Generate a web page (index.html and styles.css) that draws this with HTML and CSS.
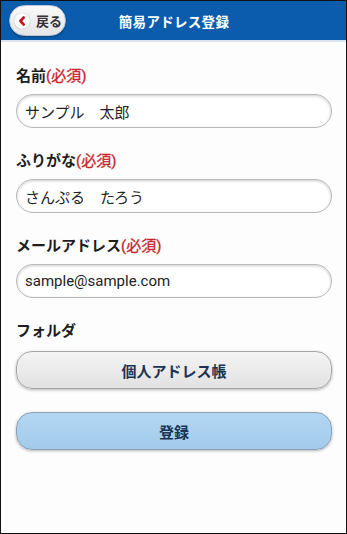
FILE: index.html
```html
<!DOCTYPE html>
<html>
<head>
	<meta charset="utf-8">
	<title>簡易アドレス登録</title>
	<link rel="stylesheet" href="styles.css">
</head>
<body>
	<div class="page">
		<div class="header">
			<a href="#" class="back-btn">
				<span class="back-icon">
					<svg width="16" height="16" viewBox="0 0 16 16">
						<circle cx="8" cy="8" r="7.5" fill="#fff"/>
						<path d="M9.6 4.6 L6.4 8 L9.6 11.4" fill="none" stroke="#c8141e" stroke-width="2.8" stroke-linecap="round" stroke-linejoin="round"/>
					</svg>
				</span>
				戻る
			</a>
			<div class="title">簡易アドレス登録</div>
		</div>
		<div class="form">
			<div class="form-element">
				<label for="name">名前<span class="req">(必須)</span></label>
				<input type="text" id="name" value="サンプル　太郎">
			</div>
			<div class="form-element">
				<label for="kana">ふりがな<span class="req">(必須)</span></label>
				<input type="text" id="kana" value="さんぷる　たろう">
			</div>
			<div class="form-element">
				<label for="mail">メールアドレス<span class="req">(必須)</span></label>
				<input type="text" id="mail" value="sample@sample.com">
			</div>
			<div class="form-element">
				<label>フォルダ</label>
				<button class="btn btn-folder">個人アドレス帳</button>
			</div>
			<div class="form-element">
				<button class="btn btn-submit">登録</button>
			</div>
		</div>
	</div>
</body>
</html>
```

FILE: styles.css
```css
* {
	margin: 0;
	padding: 0;
	box-sizing: border-box;
}

body {
	font-family: Roboto, "Noto Sans CJK JP", sans-serif;
	background: #fff;
	color: #222;
}

.page {
	height: 534px;
	border: 1px solid #111;
	background: #fdfdfd;
}

.header {
	position: relative;
	height: 41px;
	background: #0b5cad;
	border-bottom: 2px solid #d9e5f2;
	display: flex;
	align-items: center;
	justify-content: center;
}

.back-btn {
	position: absolute;
	left: 8px;
	top: 4px;
	width: 57px;
	height: 31px;
	border-radius: 16px;
	background: linear-gradient(#fafafa, #e4e4e4);
	border: 1px solid #b8c6d6;
	box-shadow: 0 1px 2px rgba(0, 0, 0, 0.35);
	display: flex;
	align-items: center;
	padding-left: 4px;
	gap: 6px;
	color: #333;
	font-size: 13px;
	font-weight: 700;
	text-decoration: none;
}

.back-icon {
	display: flex;
	border-radius: 50%;
	box-shadow: 0 0 1px rgba(0, 0, 0, 0.3);
}

.title {
	color: #fff;
	font-size: 13.5px;
	font-weight: 700;
	letter-spacing: 0.3px;
	margin-left: 1px;
}

.form {
	padding: 24px 14px 0 15px;
}

.form-element {
	margin-bottom: 23px;
}

.form-element label {
	display: block;
	font-size: 15px;
	font-weight: 700;
	line-height: 20px;
	color: #1e1e1e;
	margin-bottom: 8px;
}

.form-element .req {
	color: #c8232b;
	font-weight: 400;
	-webkit-text-stroke: 0.3px #c8232b;
}

.form-element input {
	display: block;
	width: 100%;
	height: 34px;
	border: 1px solid #b9b9b9;
	border-radius: 17px;
	background: #fff;
	box-shadow: inset 0 1px 3px rgba(0, 0, 0, 0.2);
	padding: 0 8px;
	font-family: Roboto, "Noto Sans CJK JP", sans-serif;
	font-size: 15px;
	color: #222;
}

.btn {
	display: block;
	width: 100%;
	height: 38px;
	border-radius: 16px;
	font-family: Roboto, "Noto Sans CJK JP", sans-serif;
	font-size: 15px;
	font-weight: 700;
	color: #1c3454;
	cursor: pointer;
	box-shadow: 0 1px 3px rgba(0, 0, 0, 0.3);
}

.btn-folder {
	background: linear-gradient(#f4f4f4, #e2e2e2);
	border: 1px solid #a6a6a6;
	margin-top: 10px;
}

.btn-submit {
	background: linear-gradient(#b2d6f3, #a3cbeb);
	border: 1px solid #8e9fb0;
	margin-top: 3px;
}
```
